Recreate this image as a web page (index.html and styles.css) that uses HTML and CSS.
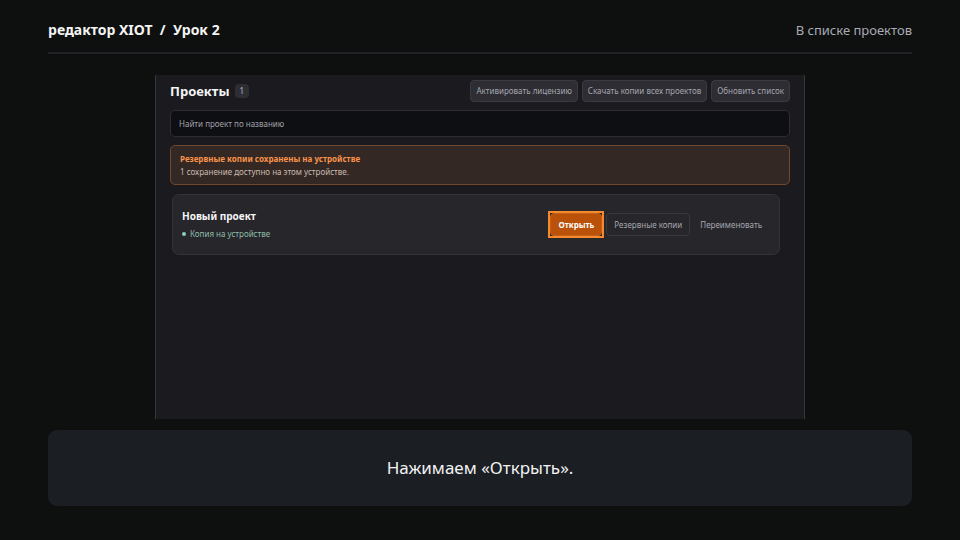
FILE: index.html
```html
<!DOCTYPE html>
<html lang="ru">
<head>
<meta charset="utf-8">
<title>редактор XIOT / Урок 2</title>
<link rel="stylesheet" href="styles.css">
</head>
<body>
<header class="lesson-header">
  <div class="lesson-title">редактор XIOT&nbsp; /&nbsp; Урок 2</div>
  <div class="lesson-step">В списке проектов</div>
</header>
<main class="projects">
  <div class="toolbar">
    <h1 class="heading">Проекты</h1>
    <span class="count">1</span>
    <div class="tools">
      <button class="button" type="button">Активировать лицензию</button>
      <button class="button" type="button">Скачать копии всех проектов</button>
      <button class="button" type="button">Обновить список</button>
    </div>
  </div>
  <input class="search" type="search" aria-label="Найти проект по названию" placeholder="Найти проект по названию">
  <section class="notice">
    <strong class="notice-title">Резервные копии сохранены на устройстве</strong>
    <p class="notice-text">1 сохранение доступно на этом устройстве.</p>
  </section>
  <article class="project">
    <div class="project-info">
      <h2 class="project-name">Новый проект</h2>
      <p class="project-status">Копия на устройстве</p>
    </div>
    <div class="actions">
      <span class="highlight"><button class="button primary" type="button">Открыть</button></span>
      <button class="button outline" type="button">Резервные копии</button>
      <button class="button ghost" type="button">Переименовать</button>
    </div>
  </article>
</main>
<footer class="caption">Нажимаем «Открыть».</footer>
</body>
</html>
```
FILE: styles.css
```css
* {
  box-sizing: border-box;
}

body {
  display: flex;
  flex-direction: column;
  min-height: 100vh;
  margin: 0;
  padding: 0 48px 34px;
  background: #0e100f;
  color: #f4f4f5;
  font-family: "Noto Sans", sans-serif;
}

h1, h2, p {
  margin: 0;
}

.lesson-header {
  display: flex;
  justify-content: space-between;
  align-items: center;
  padding: 16px 0 8px;
  border-bottom: 2px solid #202325;
  line-height: 28px;
}

.lesson-title {
  font-size: 14px;
  font-weight: 700;
}

.lesson-step {
  color: #a9abb5;
  font-size: 13px;
}

.projects {
  flex: 1;
  width: 100%;
  max-width: 650px;
  margin: 21px auto 11px;
  padding: 5px 14px;
  border: solid #36363c;
  border-width: 0 1px;
  background: #1a1a1f;
}

.toolbar {
  display: flex;
  align-items: center;
  gap: 5px;
}

.heading {
  font-size: 13px;
  font-weight: 700;
  line-height: 22px;
}

.count {
  padding: 0 5px;
  border-radius: 4px;
  background: #2d2e34;
  color: #b5b5bd;
  font-size: 8px;
  line-height: 14px;
}

.tools {
  display: flex;
  gap: 4px;
  margin-left: auto;
}

.button {
  padding: 0 5px;
  border: 1px solid #3a3a41;
  border-radius: 4px;
  background: #2d2d33;
  color: #a6a6af;
  font-family: inherit;
  font-size: 8px;
  line-height: 20px;
}

.search {
  display: block;
  width: 100%;
  height: 27px;
  margin: 8px 0;
  padding: 0 8px;
  border: 1px solid #2d2d33;
  border-radius: 5px;
  background: #0e0f12;
  color: #f4f4f5;
  font-family: inherit;
  font-size: 8px;
}

.search::placeholder {
  color: #a0a0a9;
  opacity: 1;
}

.notice {
  padding: 6px 9px;
  border: 1px solid #70482d;
  border-radius: 5px;
  background: #332823;
  font-size: 8px;
  line-height: 13px;
}

.notice-title {
  display: block;
  color: #f9934a;
}

.notice-text {
  color: #cabbb3;
}

.project {
  display: flex;
  justify-content: space-between;
  align-items: center;
  margin: 9px 10px 0 2px;
  padding: 12px 9px;
  border: 1px solid #333339;
  border-radius: 7px;
  background: #26262b;
}

.project-name {
  font-size: 10px;
  font-weight: 700;
  line-height: 19px;
}

.project-status {
  display: flex;
  align-items: center;
  gap: 4px;
  color: #8fbfaa;
  font-size: 8px;
  line-height: 16px;
}

.project-status::before {
  width: 4px;
  height: 4px;
  border-radius: 50%;
  background: #91d0b5;
  content: "";
}

.actions {
  display: flex;
  align-items: center;
  gap: 2px;
}

.actions .button {
  padding: 0 7px;
  line-height: 21px;
}

.highlight {
  display: flex;
  border: 2px solid #f58a2c;
}

.actions .primary {
  border-color: #c65f15;
  background: #b95108;
  color: #fff;
  font-weight: 700;
}

.outline {
  border-color: #38383e;
  background: transparent;
}

.ghost {
  border-color: transparent;
  background: transparent;
}

.caption {
  padding: 23px 24px;
  border-radius: 9px;
  background: #1b1e22;
  color: #f1f2f4;
  font-size: 17px;
  line-height: 30px;
  text-align: center;
}
```
